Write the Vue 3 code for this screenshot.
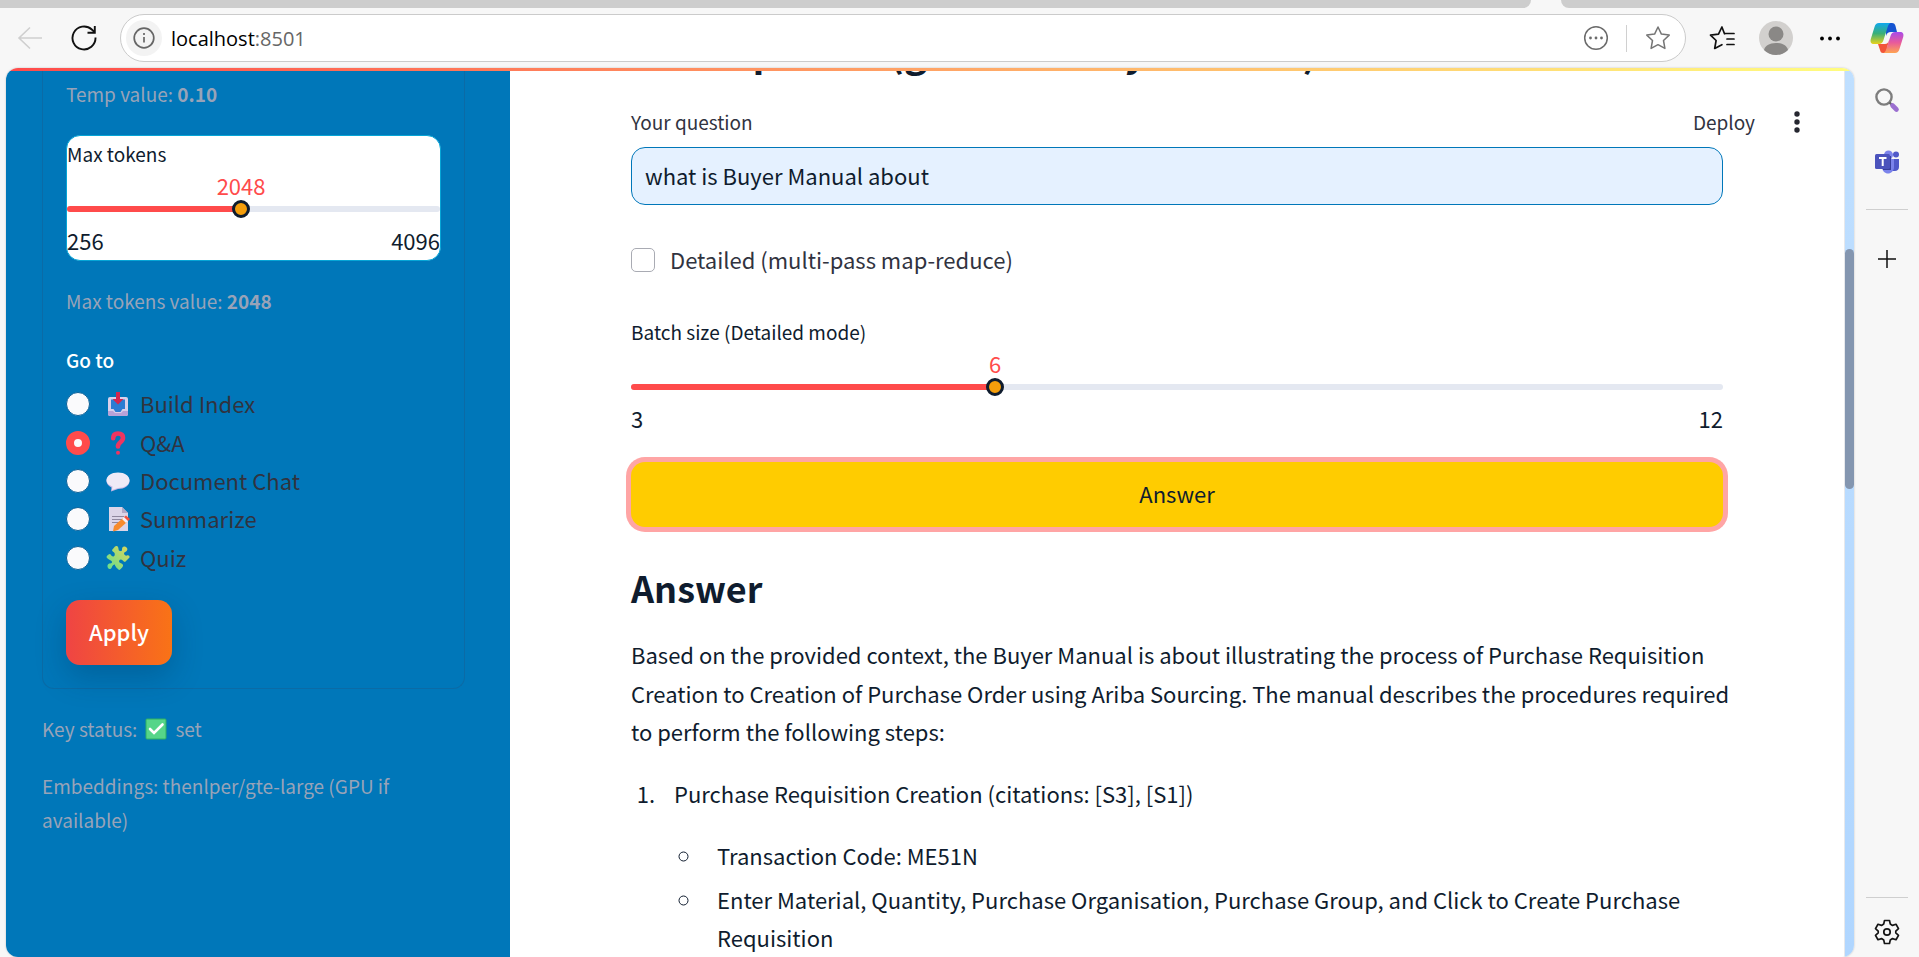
<script setup>
import { ref } from 'vue'

const question = ref('what is Buyer Manual about')
const detailed = ref(false)
const maxTokens = ref(2048)
const batchSize = ref(6)
const current = ref('qa')

const pages = [
  { id: 'index', label: 'Build Index' },
  { id: 'qa', label: 'Q&A' },
  { id: 'chat', label: 'Document Chat' },
  { id: 'summary', label: 'Summarize' },
  { id: 'quiz', label: 'Quiz' },
]

const percent = (value, min, max) => ((value - min) / (max - min)) * 100 + '%'
</script>

<template>
  <div class="browser">
    <div class="tabs">
      <div class="tab-left"></div>
      <div class="tab-right"></div>
    </div>

    <header class="toolbar">
      <button class="icon-btn" aria-label="Back">
        <svg width="26" height="24" viewBox="0 0 26 24" fill="none" stroke="#cfcfcf" stroke-width="1.6"><path d="M25 12H2M13 1.500L2 12l11 10.500" /></svg>
      </button>
      <button class="icon-btn reload" aria-label="Refresh">
        <svg width="26" height="26" viewBox="0 0 26 26" fill="none" stroke="#111" stroke-width="1.900"><path d="M24.500 12.500A11.500 11.500 0 1 1 20.800 4.500L23.500 7" /><path d="M23.800 1v6.700H16.500" /></svg>
      </button>
      <div class="address">
        <button class="site-info" aria-label="Site information">
          <svg width="22" height="22" viewBox="0 0 22 22" fill="none" stroke="#666" stroke-width="1.700"><circle cx="11" cy="11" r="9.800" /><path d="M11 10v5.500M11 6v2" /></svg>
        </button>
        <a class="url" href="http://localhost:8501">localhost<span>:8501</span></a>
        <button class="icon-btn" aria-label="More page actions">
          <svg width="26" height="26" viewBox="0 0 26 26"><circle cx="13" cy="13" r="11.300" fill="none" stroke="#6b6b6b" stroke-width="1.500" /><g fill="#6b6b6b"><circle cx="7.500" cy="13" r="1.400" /><circle cx="13" cy="13" r="1.400" /><circle cx="18.500" cy="13" r="1.400" /></g></svg>
        </button>
        <i class="separator"></i>
        <button class="icon-btn" aria-label="Add to favorites">
          <svg width="26" height="26" viewBox="0 0 26 26" fill="none" stroke="#757575" stroke-width="1.500" stroke-linejoin="round"><path d="M13 2l3.400 7.100 7.800 1-5.700 5.400 1.400 7.900L13 19.700l-6.900 3.700 1.400-7.900-5.700-5.400 7.800-1z" /></svg>
        </button>
      </div>
      <div class="actions">
        <button class="icon-btn" aria-label="Favorites">
          <svg width="26" height="26" viewBox="0 0 26 26" fill="none" stroke="#111" stroke-width="1.700" stroke-linejoin="round" stroke-linecap="round"><path d="M15.500 8.700L12.900 2 9.500 9.100 1.500 10.100l5.600 5.400-1.400 8 7.200-3.800" /><path d="M16 8.500h9M18 14h7M18 19.500h7" /></svg>
        </button>
        <button class="icon-btn" aria-label="Profile">
          <svg width="34" height="34" viewBox="0 0 34 34"><defs><clipPath id="avatar"><circle cx="17" cy="17" r="17" /></clipPath></defs><g clip-path="url(#avatar)"><path fill="#d2d0ce" d="M0 0h34v34H0z" /><circle cx="17" cy="13" r="7.500" fill="#8a8886" /><path fill="#8a8886" d="M5 29c1-4 5-7 12-7s11 3 12 7v5H5z" /></g></svg>
        </button>
        <button class="icon-btn" aria-label="Settings and more">
          <svg width="26" height="26" viewBox="0 0 26 26"><circle cx="5" cy="13.500" r="1.900" /><circle cx="13" cy="13.500" r="1.900" /><circle cx="21" cy="13.500" r="1.900" /></svg>
        </button>
        <button class="icon-btn" aria-label="Copilot">
          <svg width="34" height="32" viewBox="0 0 34 32">
            <defs>
              <linearGradient id="cp1" x1="0" y1="0" x2="0" y2="1"><stop offset="0" stop-color="#11a8ee" /><stop offset=".5" stop-color="#3aaf78" /><stop offset="1" stop-color="#e8d21c" /></linearGradient>
              <linearGradient id="cp2" x1="0" y1="0" x2="0" y2="1"><stop offset="0" stop-color="#a84bea" /><stop offset=".5" stop-color="#e85a9c" /><stop offset="1" stop-color="#ffa452" /></linearGradient>
            </defs>
            <path fill="#1554d1" d="M16 1h6c2 0 3 1 3.500 3l1.500 6h-6c-3 0-4 1-5 4z" />
            <path fill="#f2553a" d="M8 22h7c2 0 3-1 4-4l-3 13h-3c-2 0-2.500-1-3-3z" />
            <path fill="url(#cp1)" d="M9 1h12c-1.500 0-2.500 1.500-3 3l-4.500 14c-.8 2.500-2 4-5 4H4c-3 0-4-2-3.200-5L4.500 5C5.300 2.500 6.500 1 9 1z" />
            <path fill="url(#cp2)" d="M25 31H13c1.500 0 2.500-1.500 3-3l4.500-14c.8-2.500 2-4 5-4H30c3 0 4 2 3.200 5L29.500 27c-.8 2.500-2 4-4.500 4z" />
          </svg>
        </button>
      </div>
    </header>

    <div class="body">
      <div class="page">
        <div class="rainbow"></div>
        <div class="app">
          <aside class="sidebar">
            <form class="settings" @submit.prevent>
              <p class="caption">Temp value: <b>0.10</b></p>
              <div class="slider token-card">
                <label for="tokens">Max tokens</label>
                <div class="rail">
                  <output class="value" :style="{ left: percent(maxTokens, 256, 4096) }">{{ maxTokens }}</output>
                  <div class="bar"><div class="fill" :style="{ width: percent(maxTokens, 256, 4096) }"></div></div>
                  <input id="tokens" v-model="maxTokens" type="range" min="256" max="4096" step="256" />
                </div>
                <div class="bounds"><span>256</span><span>4096</span></div>
              </div>
              <p class="caption token-value">Max tokens value: <b>{{ maxTokens }}</b></p>
              <fieldset class="nav">
                <legend>Go to</legend>
                <div class="options">
                  <label v-for="p in pages" :key="p.id">
                    <input v-model="current" type="radio" name="page" :value="p.id" />
                    <svg v-if="p.id === 'index'" width="24" height="26" viewBox="0 0 24 26">
                      <path fill="#d9d0ea" d="M4 6h16a2 2 0 0 1 2 2v15a2 2 0 0 1-2 2H4a2 2 0 0 1-2-2V8a2 2 0 0 1 2-2z" /><path fill="#b7a2d8" d="M2 20h5l2 2h6l2-2h5v3a2 2 0 0 1-2 2H4a2 2 0 0 1-2-2z" />
                      <path fill="#2b7cd3" d="M5 8.500h14v9.500h-2.500l-2 3h-5l-2-3H5z" /><path fill="#d3264f" d="M10 1h4v7h3.500L12 13.500 6.500 8H10z" />
                    </svg>
                    <svg v-else-if="p.id === 'qa'" width="24" height="26" viewBox="0 0 24 26">
                      <path d="M7.200 8.300C7.200 4.800 9.300 3.500 12 3.500c3 0 5 1.500 5 4.300 0 4.700-5.200 4.200-5 8.700" fill="none" stroke="#ee3560" stroke-width="4.600" stroke-linecap="round" /><circle cx="12" cy="22.800" r="2" fill="#ee3560" />
                    </svg>
                    <svg v-else-if="p.id === 'chat'" width="24" height="26" viewBox="0 0 24 26">
                      <path fill="#c9b8e6" d="M12 5c6.500 0 11.500 3.300 11.500 8S18.500 21 12 21l-7 2.500.5-4C2.500 18 .5 16 .5 13 .5 8.300 5.500 5 12 5z" /><path fill="#efeaf6" d="M12 4.500c6.500 0 11.500 3.300 11.500 7.800S18.500 20 12 20l-6 2 .5-3.500c-3.500-1.200-6-3.500-6-6.200C.5 7.800 5.500 4.500 12 4.500z" />
                    </svg>
                    <svg v-else-if="p.id === 'summary'" width="24" height="26" viewBox="0 0 24 26">
                      <path fill="#dcd5e8" d="M3 1h13l6 6v18H3z" /><path fill="#b4a9c6" d="M16 1l6 6h-6z" /><path stroke="#8f879e" stroke-width="1" d="M6 10.500h12M6 13.500h10M6 16.500h7" />
                      <path fill="#f78a2c" d="M8 20l9-8 4 4-9 8-5 1.500z" /><path fill="#f4f0f8" d="M16 13l2-2 4 4-2 2z" /><path fill="#f2523e" d="M18 11l2-1.500 4 3.500-2 2z" />
                    </svg>
                    <svg v-else width="24" height="26" viewBox="0 0 24 26">
                      <defs><linearGradient id="puzzle" x1="0" y1="1" x2="1" y2="0"><stop offset="0" stop-color="#62e08e" /><stop offset="1" stop-color="#dfd55a" /></linearGradient></defs>
                      <path fill="url(#puzzle)" d="M6 5l3-3.500c1-1 2.500-.5 3 .5 1 2 0 3.500 2 4s2-.5 2-2 1-3 3-2.500 3 2.500 2 4-3 1.500-3 3 2 2.500 3 2 3 0 2.500 2L19 17c-2 0-2-2.500-4-2.500s-2.500 2-1.500 3 3 1 3.500 2.500-2 4-3.500 5c-1.500-.5-4.500-3.500-4.500-5S6.500 20 6 22s-3 3-4 1-.5-4.500 2-4.500c2 0 2.500-1.500 1.500-2.500S.500 13.500.5 12 3 9 4 9s1 2.500 3 2.500S9 9 8.500 8 6 6.500 6 5z" />
                    </svg>
                    <span>{{ p.label }}</span>
                  </label>
                </div>
              </fieldset>
              <button class="apply" type="submit">Apply</button>
            </form>
            <p class="caption status">Key status:
              <svg width="22" height="22" viewBox="0 0 22 22" role="img" aria-label="ok"><rect x="1" y="1" width="20" height="20" rx="1" fill="#56d589" stroke="#2fb163" /><path d="M5 11l4 4 8.500-8.500" fill="none" stroke="#fff" stroke-width="2.600" stroke-linecap="round" /></svg>
              set</p>
            <p class="caption">Embeddings: thenlper/gte-large (GPU if available)</p>
          </aside>

          <main class="main">
            <div class="scrolled-title"><h2>Ask Expert AI (grounded by sources)</h2></div>
            <div class="question-head">
              <label for="question">Your question</label>
              <div class="deploy">
                <button class="deploy-btn">Deploy</button>
                <button class="icon-btn" aria-label="Main menu">
                  <svg width="8" height="22" viewBox="0 0 8 22" fill="#262730"><circle cx="4" cy="3" r="2.700" /><circle cx="4" cy="11" r="2.700" /><circle cx="4" cy="19" r="2.700" /></svg>
                </button>
              </div>
            </div>
            <input id="question" v-model="question" class="question" type="text" />
            <label class="check"><input v-model="detailed" type="checkbox" /><span>Detailed (multi-pass map-reduce)</span></label>
            <div class="slider batch">
              <label for="batch">Batch size (Detailed mode)</label>
              <div class="rail">
                <output class="value" :style="{ left: percent(batchSize, 3, 12) }">{{ batchSize }}</output>
                <div class="bar"><div class="fill" :style="{ width: percent(batchSize, 3, 12) }"></div></div>
                <input id="batch" v-model="batchSize" type="range" min="3" max="12" />
              </div>
              <div class="bounds"><span>3</span><span>12</span></div>
            </div>
            <button class="answer-btn">Answer</button>
            <h3>Answer</h3>
            <p class="text">Based on the provided context, the Buyer Manual is about illustrating the process of Purchase Requisition Creation to Creation of Purchase Order using Ariba Sourcing. The manual describes the procedures required to perform the following steps:</p>
            <ol>
              <li>
                Purchase Requisition Creation (citations: [S3], [S1])
                <ul>
                  <li>Transaction Code: ME51N</li>
                  <li>Enter Material, Quantity, Purchase Organisation, Purchase Group, and Click to Create Purchase Requisition</li>
                </ul>
              </li>
            </ol>
          </main>
          <div class="scrollbar"><div class="thumb"></div></div>
        </div>
      </div>

      <nav class="edge-bar" aria-label="Browser sidebar">
        <button class="icon-btn" aria-label="Search">
          <svg width="26" height="26" viewBox="0 0 26 26" fill="none"><circle cx="10" cy="10" r="7.600" stroke="#7d7d7d" stroke-width="2.400" /><path d="M15.500 15.500l2.500 2.500" stroke="#666" stroke-width="2.400" /><path d="M18.500 18.500l4 4" stroke="#9b6fd0" stroke-width="4.600" stroke-linecap="round" /></svg>
        </button>
        <button class="icon-btn teams" aria-label="Teams">
          <svg width="26" height="26" viewBox="0 0 26 26"><circle cx="14.500" cy="6" r="4.500" fill="#7b83eb" /><circle cx="22" cy="5.500" r="3" fill="#5059c9" /><path fill="#5059c9" d="M18 10h7v8c0 2.500-2 4-4 4h-3z" /><path fill="#7b83eb" d="M8 10h12v8c0 4-3 6.500-6 6.500S8 22 8 18z" /><path fill="#373e9a" d="M8 7h9v14H9z" /><rect x="1" y="5" width="15" height="15" rx="1.500" fill="#4b53bc" /><path stroke="#fff" stroke-width="2" d="M5 9h7.500M8.700 9v8" /></svg>
        </button>
        <hr />
        <button class="icon-btn plus" aria-label="Customize">
          <svg width="18" height="18" viewBox="0 0 18 18" stroke="#111" stroke-width="1.500"><path d="M9 0v18M0 9h18" /></svg>
        </button>
        <hr class="bottom-rule" />
        <button class="icon-btn" aria-label="Settings">
          <svg width="26" height="26" viewBox="0 0 26 26" fill="none" stroke="#151515" stroke-width="1.700" stroke-linejoin="round"><path d="M10.500 1.500h5l.8 3.600 2.200 1.300 3.500-1.100 2.500 4.300-2.700 2.500v1.800l2.700 2.500-2.500 4.300-3.500-1.100-2.200 1.300-.8 3.600h-5l-.8-3.600-2.200-1.300-3.500 1.100-2.500-4.300 2.700-2.500v-1.800L1.500 9.600 4 5.300l3.500 1.100 2.200-1.300z" /><circle cx="13" cy="13" r="3.200" /></svg>
        </button>
      </nav>
    </div>
  </div>
</template>

<style>
body {
  margin: 0;
}
</style>

<style scoped>
* {
  box-sizing: border-box;
}
.browser {
  height: 100vh;
  display: flex;
  flex-direction: column;
  background: #f7f7f7;
  overflow: hidden;
  font-family: 'Noto Sans CJK SC', 'Open Sans', sans-serif;
  font-size: 22px;
  line-height: 1.75;
  color: #0f1c2e;
}
p,
h2,
h3 {
  margin: 0;
}
button {
  font: inherit;
  color: inherit;
  border: 0;
  padding: 0;
  background: none;
}
svg {
  display: block;
  flex: none;
}
.icon-btn {
  display: flex;
  align-items: center;
  justify-content: center;
}
.tabs {
  height: 8px;
  flex: none;
  display: flex;
  justify-content: space-between;
}
.tab-left {
  flex: 1;
  background: #cdcdcd;
  border-bottom-right-radius: 8px;
  margin-right: 30px;
}
.tab-right {
  width: 358px;
  background: #cdcdcd;
  border-bottom-left-radius: 8px;
}
.toolbar {
  height: 60px;
  flex: none;
  display: flex;
  align-items: center;
  padding: 0 15px 0 17px;
}
.reload {
  margin: 0 23px 0 28px;
}
.address {
  flex: 1;
  height: 48px;
  display: flex;
  align-items: center;
  border: 1px solid #cbcbcb;
  border-radius: 24px;
  background: #fff;
  padding: 0 14px 0 5px;
}
.site-info {
  width: 36px;
  height: 36px;
  border-radius: 50%;
  background: #f3f3f3;
  display: flex;
  align-items: center;
  justify-content: center;
}
.url {
  flex: 1;
  margin-left: 9px;
  font-family: 'Open Sans', sans-serif;
  font-size: 20px;
  color: #000;
  text-decoration: none;
}
.url span {
  color: #666;
}
.separator {
  width: 1px;
  height: 27px;
  background: #d0d0d0;
  margin: 0 18px 0 17px;
}
.actions {
  display: flex;
  align-items: center;
  gap: 24px;
  margin-left: 23px;
}
.actions .icon-btn:last-child {
  margin-left: 3px;
}
.body {
  flex: 1;
  min-height: 0;
  display: flex;
}
.page {
  flex: 1;
  min-width: 0;
  margin-left: 6px;
  display: flex;
  flex-direction: column;
  border-radius: 12px;
  overflow: hidden;
  background: #fff;
  box-shadow: 0 0 2px #bbb;
}
.rainbow {
  height: 3px;
  flex: none;
  background: linear-gradient(90deg, #ff4b4b, #fffd80);
}
.app {
  flex: 1;
  min-height: 0;
  display: flex;
}
.sidebar {
  width: 504px;
  flex: none;
  background: #0077b9;
  padding: 0 45px 0 36px;
  overflow: hidden;
}
.settings {
  border: 1px solid #0b6ba6;
  border-top: 0;
  border-radius: 0 0 12px 12px;
  padding: 6px 23px 23px;
  margin-bottom: 23px;
}
.caption {
  font-size: 19px;
  line-height: 34px;
  color: #98a3b8;
}
.caption b {
  font-weight: 700;
}
.token-card {
  margin: 24px 0 23px;
  border: 1px solid #06a5d6;
  border-radius: 14px;
  background: #fff;
}
.slider label {
  display: block;
  font-size: 19px;
  line-height: 36px;
}
.rail {
  position: relative;
  height: 46px;
  padding-top: 34px;
}
.value {
  position: absolute;
  top: 0;
  transform: translateX(-50%);
  color: #ff4b4b;
  line-height: 26px;
}
.bar {
  height: 6px;
  border-radius: 3px;
  background: #e4e8f1;
  overflow: hidden;
}
.fill {
  height: 100%;
  background: #ff4b4b;
}
.rail input {
  position: absolute;
  left: -9px;
  top: 28px;
  width: calc(100% + 18px);
  height: 18px;
  margin: 0;
  appearance: none;
  background: none;
}
.rail input::-webkit-slider-thumb {
  appearance: none;
  width: 18px;
  height: 18px;
  border-radius: 50%;
  border: 3px solid #0f1c2e;
  background: #f59e0b;
}
.bounds {
  display: flex;
  justify-content: space-between;
  padding: 4px 0 2px;
  line-height: 36px;
}
.nav {
  border: 0;
  margin: 25px 0 23px;
  padding: 0;
}
.nav legend {
  padding: 0;
  font-size: 19px;
  line-height: 34px;
  font-weight: 500;
  color: #fff;
}
.options {
  height: 192px;
  margin-top: 8px;
  display: grid;
  grid-template-rows: repeat(5, 1fr);
}
.options label {
  display: flex;
  align-items: center;
  color: #31333f;
  line-height: 36px;
}
.options input {
  appearance: none;
  width: 24px;
  height: 24px;
  margin: 0 16px 0 0;
  border: 1px solid #0a6199;
  border-radius: 50%;
  background: #fafafc;
}
.options input:checked {
  border: 8px solid #ff4b4b;
}
.options span,
.check span {
  padding-bottom: 2px;
}
.options span {
  margin-left: 10px;
}
.apply {
  display: block;
  height: 65px;
  padding: 0 23px 2px;
  border-radius: 14px;
  color: #fff;
  font-weight: 500;
  background: linear-gradient(90deg, #ef4444, #f97316);
  box-shadow: 0 12px 30px rgba(2, 40, 70, 0.25);
}
.status {
  display: flex;
  align-items: center;
  gap: 8px;
  margin-bottom: 23px;
}
.main {
  flex: 1;
  min-width: 0;
  padding: 0 121px;
  overflow: hidden;
}
.scrolled-title {
  height: 34px;
  display: flex;
  align-items: flex-end;
}
.scrolled-title h2 {
  font-size: 39px;
  line-height: 60px;
  font-weight: 700;
  padding-bottom: 25px;
  white-space: nowrap;
}
.question-head {
  display: flex;
  justify-content: space-between;
  align-items: center;
  height: 34px;
  margin-bottom: 8px;
  font-size: 19px;
  color: #31333f;
}
.deploy {
  display: flex;
  align-items: center;
  gap: 38px;
  margin-right: -78px;
}
.question {
  display: block;
  width: 100%;
  height: 58px;
  border: 1px solid #0077b9;
  border-radius: 14px;
  background: #e5f1ff;
  padding: 0 13px 2px;
  font: inherit;
  color: inherit;
}
.check {
  display: flex;
  align-items: center;
  gap: 15px;
  height: 38px;
  margin: 36px 0 35px;
  color: #31333f;
  line-height: 36px;
}
.check input {
  appearance: none;
  width: 24px;
  height: 24px;
  margin: 0;
  border: 1px solid #a9abb3;
  border-radius: 5px;
  background: #fff;
}
.answer-btn {
  display: block;
  width: 100%;
  height: 65px;
  margin-top: 24px;
  padding-bottom: 2px;
  border-radius: 14px;
  background: #ffcc00;
  box-shadow: 0 0 0 5px #ffa5a5;
}
h3 {
  font-size: 36px;
  line-height: 50px;
  font-weight: 700;
  margin: 35px 0 23px;
}
.text {
  margin-right: -10px;
}
ol,
ul {
  margin: 0;
  padding-left: 29px;
}
li {
  padding-left: 14px;
}
ol {
  margin-top: 23px;
}
ul {
  margin-top: 24px;
  list-style: circle;
}
ul li {
  margin-bottom: 5px;
}
.scrollbar {
  width: 10px;
  flex: none;
  border-left: 1px solid #e6e8ec;
  background: linear-gradient(#bfdfff, #b0d6ff);
  padding-top: 178px;
}
.thumb {
  height: 240px;
  border-radius: 5px;
  background: #8496b0;
}
.edge-bar {
  width: 65px;
  flex: none;
  display: flex;
  flex-direction: column;
  align-items: center;
  padding: 19px 0 12px;
}
.edge-bar hr {
  width: 42px;
  height: 1px;
  margin: 0;
  border: 0;
  background: #cfcfcf;
}
.teams {
  margin: 36px 0 34px;
}
.plus {
  margin-top: 40px;
}
.edge-bar .bottom-rule {
  margin: auto 0 21px;
}
</style>
